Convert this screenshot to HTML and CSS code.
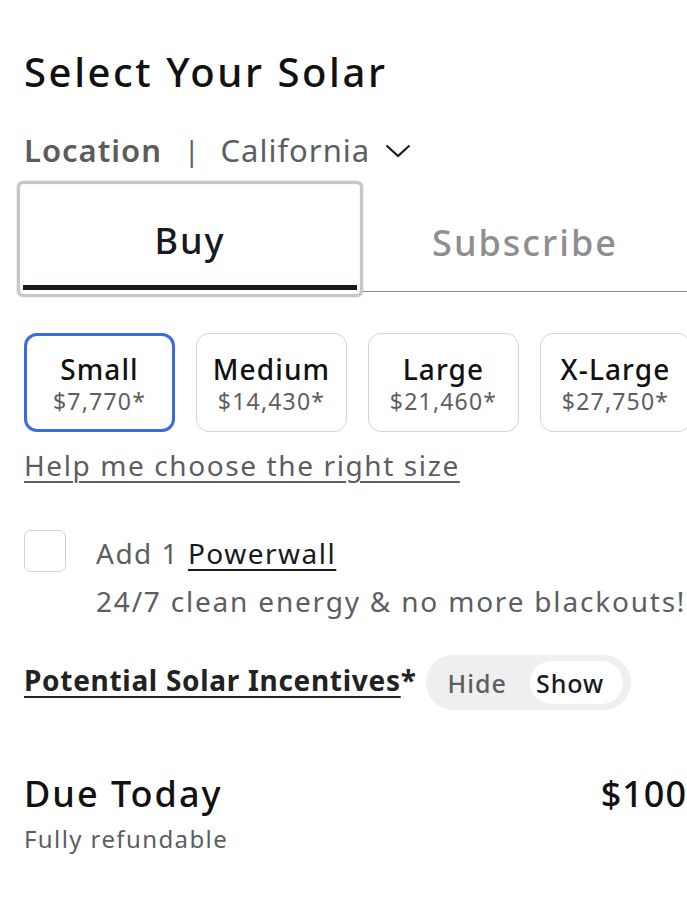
FILE: index.html
```html
<!DOCTYPE html>
<html>
<head>
<meta charset="utf-8">
<link rel="stylesheet" href="styles.css">
</head>
<body>
<main class="page">
  <h1 class="title">Select Your Solar</h1>
  <div class="location">
    <span class="loc-label">Location</span>
    <span class="loc-sep">|</span>
    <span class="loc-value">California</span>
    <svg class="chev" width="26" height="14" viewBox="0 0 26 14"><path d="M1.5 1.5 L13 12 L24.5 1.5" fill="none" stroke="#1a1a1a" stroke-width="2.2"/></svg>
  </div>
  <div class="tabs">
    <div class="tab tab-active"><span>Buy</span></div>
    <div class="tab tab-inactive"><span>Subscribe</span></div>
  </div>
  <div class="sizes">
    <div class="size size-selected"><div class="size-name">Small</div><div class="size-price">$7,770*</div></div>
    <div class="size"><div class="size-name">Medium</div><div class="size-price">$14,430*</div></div>
    <div class="size"><div class="size-name">Large</div><div class="size-price">$21,460*</div></div>
    <div class="size"><div class="size-name">X-Large</div><div class="size-price">$27,750*</div></div>
  </div>
  <div class="help-row"><a class="help">Help me choose the right size</a></div>
  <div class="powerwall">
    <div class="checkbox"></div>
    <div class="pw-text">
      <div class="pw-title">Add 1 <u>Powerwall</u></div>
      <div class="pw-sub">24/7 clean energy &amp; no more blackouts!</div>
    </div>
  </div>
  <div class="incentives">
    <span class="inc-label"><u>Potential Solar Incentives</u>*</span>
    <div class="toggle">
      <span class="tog tog-off">Hide</span>
      <span class="tog tog-on">Show</span>
    </div>
  </div>
  <div class="due">
    <div class="due-row">
      <span class="due-label">Due Today</span>
      <span class="due-amount">$100</span>
    </div>
    <div class="due-sub">Fully refundable</div>
  </div>
</main>
</body>
</html>
```
FILE: styles.css
```css
html, body {
  margin: 0;
  padding: 0;
  background: #fff;
  overflow: hidden;
}
body {
  font-family: "Noto Sans", "DejaVu Sans", sans-serif;
  color: #171a20;
}
.page {
  width: 760px;
  padding: 46px 0 0 24px;
  box-sizing: border-box;
}
.title {
  margin: 0;
  font-size: 40px;
  font-weight: 500;
  line-height: 52px;
  color: #111;
  letter-spacing: 2.6px;
}
.location {
  display: flex;
  align-items: center;
  margin-top: 31px;
  height: 42px;
  font-size: 31px;
  letter-spacing: 1px;
  color: #5c5e62;
}
.loc-label { font-weight: 600; color: #5c5c5c; }
.loc-sep { margin: 0 20px 0 22px; font-size: 28px; color: #5c5e62; }
.loc-value { font-weight: 400; color: #5c5e62; }
.chev { margin-left: 15px; margin-top: 2px; }
.tabs {
  display: flex;
  margin-top: 10px;
  margin-left: -7px;
  width: 670px;
}
.tab {
  height: 116px;
  display: flex;
  align-items: center;
  justify-content: center;
  font-size: 36px;
  letter-spacing: 2px;
  box-sizing: border-box;
}
.tab-active {
  width: 346px;
  border: 3px solid #c6c6c6;
  box-shadow: 0 0 2px #c0c0c0, inset 0 0 1px #c0c0c0;
  border-radius: 6px;
  color: #171a20;
  padding: 2px 3px 4px 3px;
  flex-direction: column;
}
.tab-active span {
  flex: 1;
  display: flex;
  align-items: center;
  justify-content: center;
  width: 100%;
  border-bottom: 5px solid #171a20;
  font-weight: 500;
  padding-top: 10px;
  box-sizing: border-box;
}
.tab-inactive {
  flex: 1;
  color: #8e8e8e;
  font-weight: 500;
  align-items: stretch;
  padding-bottom: 5px;
}
.tab-inactive span {
  flex: 1;
  display: flex;
  align-items: center;
  justify-content: center;
  border-bottom: 1px solid #8a8a8a;
  padding-top: 12px;
}
.sizes {
  display: flex;
  gap: 21px;
  margin-top: 36px;
}
.size {
  width: 151px;
  height: 99px;
  flex: none;
  box-sizing: border-box;
  border: 1.5px solid #d3d4d5;
  border-radius: 13px;
  display: flex;
  flex-direction: column;
  align-items: center;
  justify-content: center;
  padding-top: 4px;
}
.size-selected {
  border: 3.5px solid #3e6ae1;
}
.size-name {
  font-size: 28px;
  font-weight: 500;
  letter-spacing: 1.1px;
  color: #111;
  line-height: 33px;
}
.size-price {
  font-size: 23px;
  letter-spacing: 1.2px;
  color: #5c5e62;
  line-height: 30px;
}
.help-row {
  margin-top: 15px;
  height: 36px;
  line-height: 36px;
}
.help {
  font-size: 28px;
  letter-spacing: 1.6px;
  color: #5c5e62;
  text-decoration: underline;
  text-underline-offset: 5px;
  text-decoration-thickness: 1.5px;
}
.powerwall {
  display: flex;
  margin-top: 47px;
}
.checkbox {
  width: 42px;
  height: 42px;
  box-sizing: border-box;
  border: 1.5px solid #d0d0d0;
  border-radius: 7px;
  flex: none;
}
.pw-text {
  margin-left: 30px;
}
.pw-title {
  font-size: 28px;
  letter-spacing: 1.5px;
  line-height: 46px;
  color: #5c5e62;
}
.pw-title u {
  color: #171a20;
  text-underline-offset: 5px;
  text-decoration-thickness: 1.5px;
}
.pw-sub {
  font-size: 28px;
  letter-spacing: 1.8px;
  line-height: 50px;
  color: #5c5e62;
  white-space: nowrap;
}
.incentives {
  display: flex;
  align-items: center;
  margin-top: 29px;
}
.inc-label {
  font-size: 28px;
  font-weight: 700;
  letter-spacing: 0.7px;
  color: #222;
  padding-bottom: 6px;
}
.inc-label u {
  text-underline-offset: 5px;
  text-decoration-thickness: 1.5px;
}
.toggle {
  display: flex;
  align-items: center;
  margin-left: 9px;
  background: #efefef;
  border-radius: 28px;
  height: 55px;
  box-sizing: border-box;
  padding: 6px 8px 6px 22px;
  gap: 23px;
}
.tog {
  font-size: 25px;
  font-weight: 500;
  letter-spacing: 1px;
  height: 43px;
  display: flex;
  align-items: center;
}
.tog-off { color: #5c5e62; }
.tog-on {
  background: #fff;
  color: #171a20;
  border-radius: 22px;
  padding: 0 19px 0 6px;
}
.due {
  margin-top: 61px;
  width: 663px;
}
.due-row {
  display: flex;
  justify-content: space-between;
  align-items: center;
  height: 44px;
}
.due-label, .due-amount {
  font-size: 36px;
  font-weight: 500;
  letter-spacing: 2px;
  color: #111;
}
.due-amount { letter-spacing: 1px; }
.due-sub {
  font-size: 24px;
  letter-spacing: 1.4px;
  line-height: 30px;
  color: #5c5e62;
  margin-top: 9px;
}
```
